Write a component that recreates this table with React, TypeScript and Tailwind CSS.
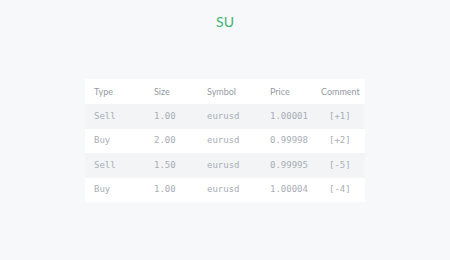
const rows = [
  { type: "Sell", size: "1.00", symbol: "eurusd", price: "1.00001", comment: "[+1]" },
  { type: "Buy", size: "2.00", symbol: "eurusd", price: "0.99998", comment: "[+2]" },
  { type: "Sell", size: "1.50", symbol: "eurusd", price: "0.99995", comment: "[-5]" },
  { type: "Buy", size: "1.00", symbol: "eurusd", price: "1.00004", comment: "[-4]" },
];

export default function App() {
  return (
    <div className="flex h-[260px] w-[450px] flex-col items-center bg-[#f7f8fa] font-['Lato',sans-serif]">
      <h1 className="mt-[13px] text-[14px] leading-[18px] text-[#3cb371]">SU</h1>
      <table className="mt-[48px] w-[280px] border-collapse text-left">
        <thead>
          <tr className="h-[25px] bg-white text-[9px] text-[#969ba4]">
            <th className="w-[60px] pl-[9px] font-normal">Type</th>
            <th className="w-[53px] pl-[9px] font-normal">Size</th>
            <th className="w-[63px] pl-[9px] font-normal">Symbol</th>
            <th className="w-[51px] pl-[9px] font-normal">Price</th>
            <th className="pl-[9px] font-normal">Comment</th>
          </tr>
        </thead>
        <tbody className="font-['DejaVu_Sans_Mono',monospace] text-[9px] text-[#aaaeb5]">
          {rows.map((r, i) => (
            <tr key={i} className={i % 2 === 0 ? "h-[24.5px] bg-[#f3f4f6]" : "h-[24.5px] bg-white"}>
              <td className="pl-[9px]">{r.type}</td>
              <td className="pl-[9px]">{r.size}</td>
              <td className="pl-[9px]">{r.symbol}</td>
              <td className="pl-[9px]">{r.price}</td>
              <td className="pl-[17px]">{r.comment}</td>
            </tr>
          ))}
        </tbody>
      </table>
    </div>
  );
}
